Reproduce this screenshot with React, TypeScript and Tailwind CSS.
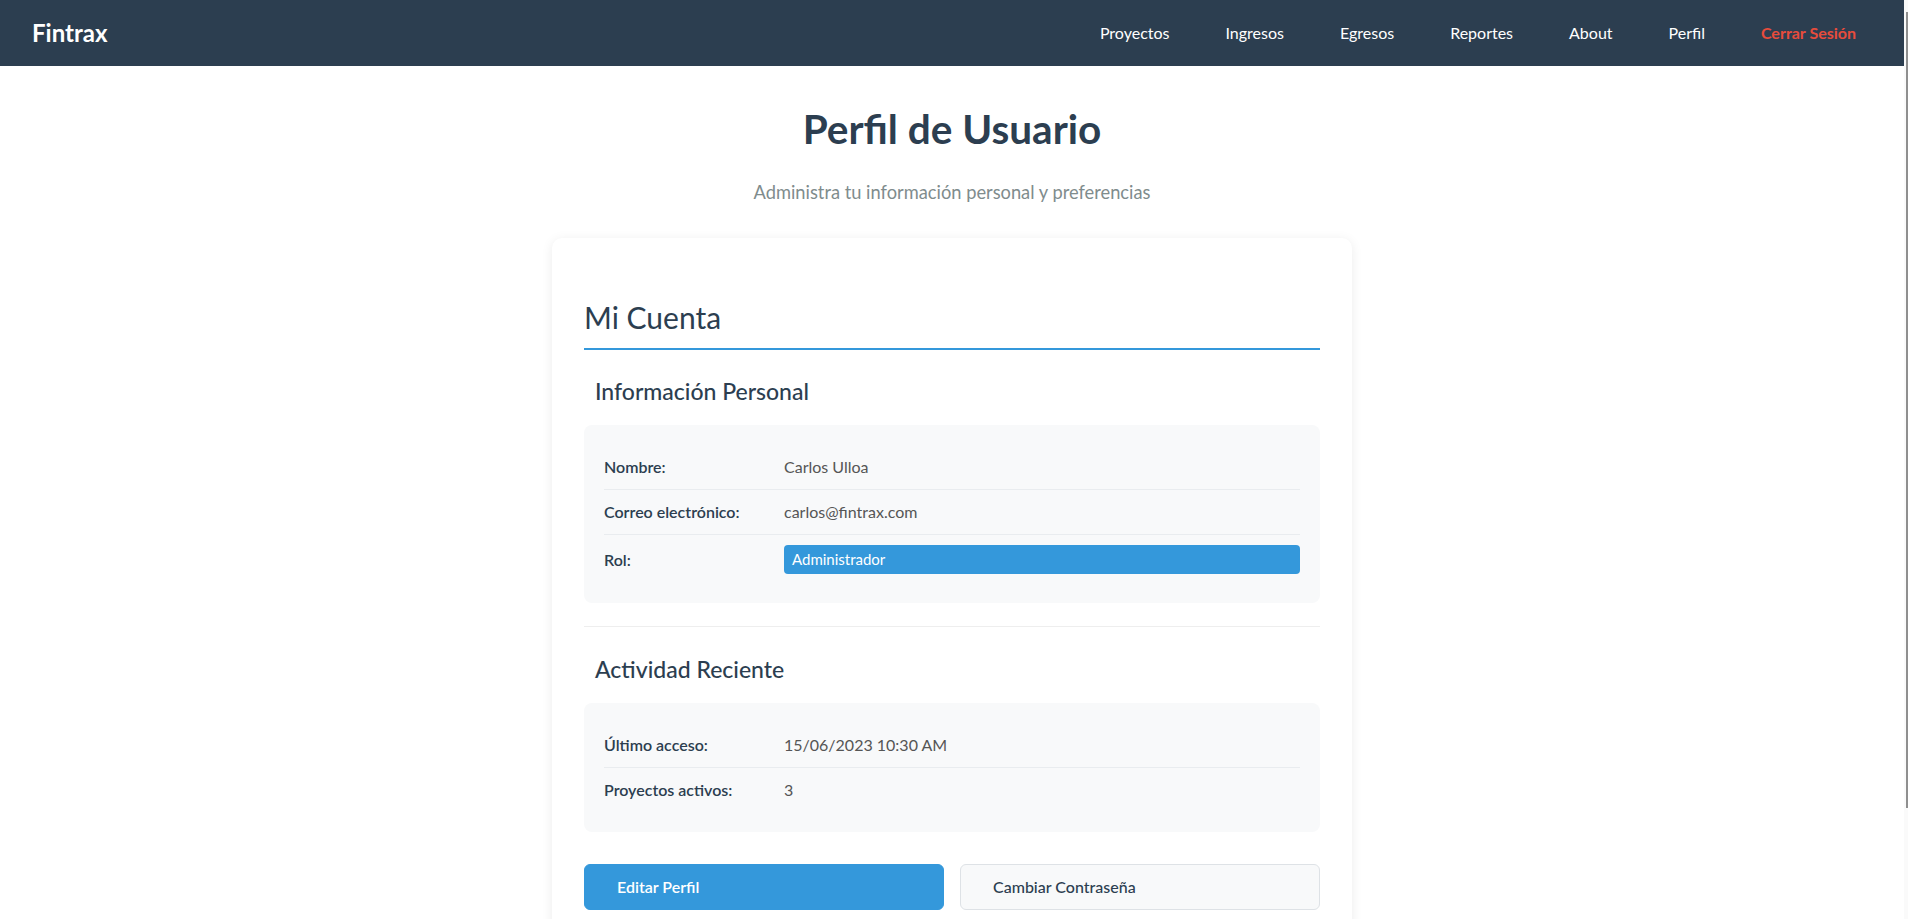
import type React from "react";

const navLinks = ["Proyectos", "Ingresos", "Egresos", "Reportes", "About", "Perfil"];

const personalInfo = [
  { label: "Nombre:", value: "Carlos Ulloa" },
  { label: "Correo electrónico:", value: "carlos@fintrax.com" },
];

const activity = [
  { label: "Último acceso:", value: "15/06/2023 10:30 AM" },
  { label: "Proyectos activos:", value: "3" },
];

const InfoRow: React.FC<{ label: string; last?: boolean; children: React.ReactNode }> = ({
  label,
  last,
  children,
}) => (
  <div
    className={`flex items-center py-[10px] ${last ? "" : "border-b border-[#e9ecef]"}`}
  >
    <span className="w-[180px] shrink-0 text-base leading-6 font-semibold text-[#2c3e50]">
      {label}
    </span>
    <div className="flex-1 text-base leading-6 text-[#555]">{children}</div>
  </div>
);

const SectionTitle: React.FC<{ className?: string; children: React.ReactNode }> = ({
  className,
  children,
}) => (
  <h3
    className={`mb-[19px] pl-[11px] text-[23px] leading-[30px] font-medium text-[#2c3e50] ${className || ""}`}
  >
    {children}
  </h3>
);

export default function App() {
  return (
    <div className="flex h-screen overflow-hidden bg-white font-['Lato',sans-serif]">
      <div className="min-w-0 flex-1 overflow-y-auto [scrollbar-width:none]">
        <nav className="h-[66px] bg-[#2c3e50] flex items-center justify-between px-8">
          <span className="text-2xl font-bold text-white">Fintrax</span>
          <ul className="flex items-center gap-6">
            {navLinks.map((link) => (
              <li key={link} className="px-4 text-base text-white">
                {link}
              </li>
            ))}
            <li className="px-4 text-base font-bold text-[#e74c3c]">Cerrar Sesión</li>
          </ul>
        </nav>

        <main className="px-4 pb-[100px]">
          <h1 className="mt-[39px] text-center text-[40.5px] leading-[48px] font-bold text-[#2c3e50]">
            Perfil de Usuario
          </h1>
          <p className="mt-[26px] text-center text-[18.3px] leading-[26px] text-[#7f8c8d]">
            Administra tu información personal y preferencias
          </p>

          <div className="mx-auto mt-[33px] w-[800px] rounded-[10px] bg-white px-8 pt-[61px] pb-8 shadow-[0_2px_12px_rgba(0,0,0,0.08)]">
            <h2 className="pb-[13px] border-b-2 border-[#3498db] text-[30px] leading-9 text-[#2c3e50]">
              Mi Cuenta
            </h2>

            <SectionTitle className="mt-[26px]">Información Personal</SectionTitle>
            <div className="rounded-lg bg-[#f8f9fa] px-5 pt-5 pb-[19px]">
              {personalInfo.map((row) => (
                <InfoRow key={row.label} label={row.label}>
                  {row.value}
                </InfoRow>
              ))}
              <InfoRow label="Rol:" last>
                <span className="block rounded bg-[#3498db] px-2 py-1 text-[15px] leading-[21px] text-white">
                  Administrador
                </span>
              </InfoRow>
            </div>

            <hr className="mt-[23px] border-0 border-t border-[#eee]" />

            <SectionTitle className="mt-[27px]">Actividad Reciente</SectionTitle>
            <div className="rounded-lg bg-[#f8f9fa] px-5 pt-5 pb-5">
              {activity.map((row, i) => (
                <InfoRow key={row.label} label={row.label} last={i === activity.length - 1}>
                  {row.value}
                </InfoRow>
              ))}
            </div>

            <div className="mt-[32px] flex gap-4">
              <button className="flex-1 rounded-md border border-[#3498db] bg-[#3498db] px-8 py-[10px] text-left text-base leading-6 font-semibold text-white">
                Editar Perfil
              </button>
              <button className="flex-1 rounded-md border border-[#dee2e6] bg-[#f8f9fa] px-8 py-[10px] text-left text-base leading-6 font-medium text-[#2c3e50]">
                Cambiar Contraseña
              </button>
            </div>
          </div>
        </main>
      </div>

      {/* thin scrollbar strip, as in the reference */}
      <div className="flex w-[4px] shrink-0 flex-col bg-[#fafafa]">
        <div className="mt-[12px] ml-auto h-[796px] w-[2px] bg-[#8f8f8f]" />
      </div>
    </div>
  );
}
